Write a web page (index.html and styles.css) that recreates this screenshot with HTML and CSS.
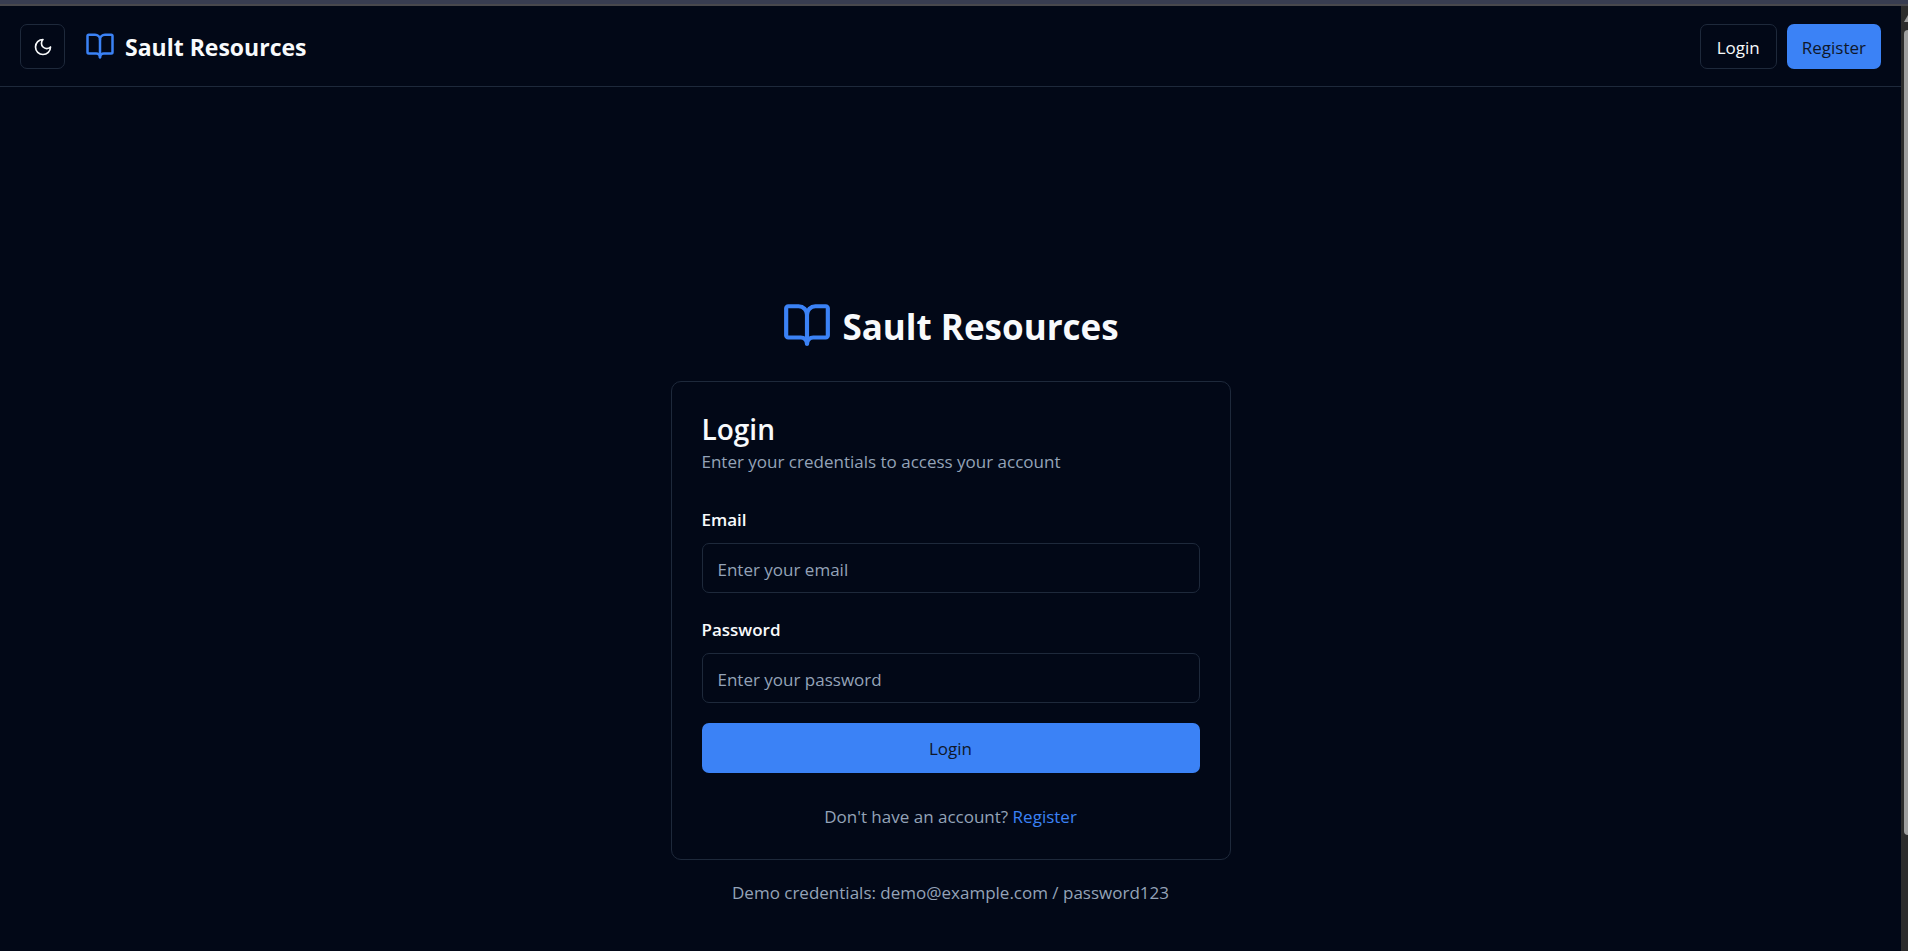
FILE: index.html
```html
<!DOCTYPE html>
<html lang="en">
<head>
<meta charset="utf-8">
<meta name="viewport" content="width=device-width, initial-scale=1">
<title>Sault Resources</title>
<link rel="stylesheet" href="styles.css">
</head>
<body>
<svg class="sprite" aria-hidden="true">
  <symbol id="book" viewBox="0 0 24 24"><path d="M12 7v14"/><path d="M3 18a1 1 0 0 1-1-1V4a1 1 0 0 1 1-1h5a4 4 0 0 1 4 4 4 4 0 0 1 4-4h5a1 1 0 0 1 1 1v13a1 1 0 0 1-1 1h-6a3 3 0 0 0-3 3 3 3 0 0 0-3-3z"/></symbol>
  <symbol id="moon" viewBox="0 0 24 24"><path d="M12 3a6 6 0 0 0 9 9 9 9 0 1 1-9-9Z"/></symbol>
</svg>
<div class="frame-edge"></div>
<div class="window">
  <div class="page">
    <header class="header">
      <button class="btn btn-outline btn-icon" type="button" aria-label="Toggle theme"><svg class="icon icon-moon"><use href="#moon"/></svg></button>
      <a class="brand" href="#"><svg class="icon icon-brand"><use href="#book"/></svg><span class="brand-name">Sault Resources</span></a>
      <nav class="actions">
        <a class="btn btn-outline" href="#login">Login</a>
        <a class="btn btn-primary" href="#register">Register</a>
      </nav>
    </header>
    <main class="main">
      <div class="hero"><svg class="icon icon-hero"><use href="#book"/></svg><h1 class="hero-name">Sault Resources</h1></div>
      <section class="card" id="login">
        <div class="card-header">
          <h2 class="card-title">Login</h2>
          <p class="text">Enter your credentials to access your account</p>
        </div>
        <form class="form">
          <div class="field">
            <label class="label" for="email">Email</label>
            <input class="input" id="email" type="email" placeholder="Enter your email">
          </div>
          <div class="field">
            <label class="label" for="password">Password</label>
            <input class="input" id="password" type="password" placeholder="Enter your password">
          </div>
          <button class="btn btn-primary btn-submit" type="submit">Login</button>
        </form>
        <p class="text signup">Don't have an account? <a class="link" href="#register">Register</a></p>
      </section>
      <p class="text demo">Demo credentials: demo@example.com / password123</p>
    </main>
  </div>
  <div class="scrollbar"><div class="scroll-arrow"></div><div class="scroll-thumb"></div></div>
</div>
</body>
</html>
```
FILE: styles.css
```css
* { box-sizing: border-box; }
body {
  margin: 0;
  min-height: 100vh;
  display: flex;
  flex-direction: column;
  background: #020817;
  color: #f8fafc;
  font-family: "Open Sans", "Noto Sans", sans-serif;
  font-size: 17px;
  line-height: 24px;
}
h1, h2, p { margin: 0; }
a { color: inherit; text-decoration: none; }
.sprite { position: absolute; width: 0; height: 0; }
.frame-edge { height: 6px; background: #383d51; border-bottom: 2px solid #48484d; }
.window { flex: 1; display: flex; overflow: hidden; }
.page { flex: 1; display: flex; flex-direction: column; }
.icon { display: block; fill: none; stroke: currentColor; stroke-width: 2; stroke-linecap: round; stroke-linejoin: round; flex: none; }
.icon-moon { width: 20px; height: 20px; }
.icon-brand { width: 30px; height: 30px; color: #3b82f6; }
.icon-hero { width: 50px; height: 50px; color: #3b82f6; }

.header { display: flex; align-items: center; gap: 20px; padding: 18px 20px 17px; border-bottom: 1px solid #1e293b; }
.brand { display: flex; align-items: flex-start; gap: 10px; }
.brand-name { font-size: 23px; font-weight: 700; line-height: 32px; }
.actions { display: flex; gap: 10px; margin-left: auto; }

.btn {
  display: inline-flex;
  align-items: center;
  justify-content: center;
  height: 45px;
  padding: 2px 14px 0;
  border: 1px solid transparent;
  border-radius: 7px;
  font: inherit;
  font-weight: 500;
  color: inherit;
  cursor: pointer;
}
.btn-outline { padding: 2px 16px 0; border-color: #1e293b; background: #020817; }
.btn-primary { background: #3b82f6; color: #0f172a; }
.btn-icon { width: 45px; padding: 0; }
.btn-submit { width: 100%; height: 50px; }

.main { display: flex; flex-direction: column; align-items: center; padding: 213px 20px 40px; }
.hero { display: flex; align-items: flex-start; gap: 10px; margin-bottom: 27px; }
.hero-name { font-size: 35px; font-weight: 700; line-height: 54px; }
.card { width: 100%; max-width: 560px; padding: 30px; border: 1px solid #1e293b; border-radius: 10px; }
.card-header { display: grid; gap: 4px; margin-bottom: 29px; }
.card-title { font-size: 28px; font-weight: 600; line-height: 34px; }
.text { color: #94a3b8; }
.form { display: grid; gap: 20px; }
.field { display: grid; gap: 11px; padding-top: 5px; }
.label { font-weight: 600; }
.input {
  width: 100%;
  height: 50px;
  padding: 2px 15px 0;
  border: 1px solid #1e293b;
  border-radius: 7px;
  background: #020817;
  color: inherit;
  font: inherit;
}
.input::placeholder { color: #94a3b8; opacity: 1; }
.signup { margin-top: 32px; text-align: center; }
.link { color: #3b82f6; }
.demo { margin-top: 21px; text-align: center; }

.scrollbar { flex: none; width: 7px; background: #2c2c2c; padding: 9px 0 0 3px; }
.scroll-arrow { height: 7px; background: #9f9f9f; clip-path: polygon(0 100%, 100% 0, 100% 100%); }
.scroll-thumb { height: 86%; margin-top: 8px; background: #9f9f9f; border-radius: 4px 0 0 4px; }
```
